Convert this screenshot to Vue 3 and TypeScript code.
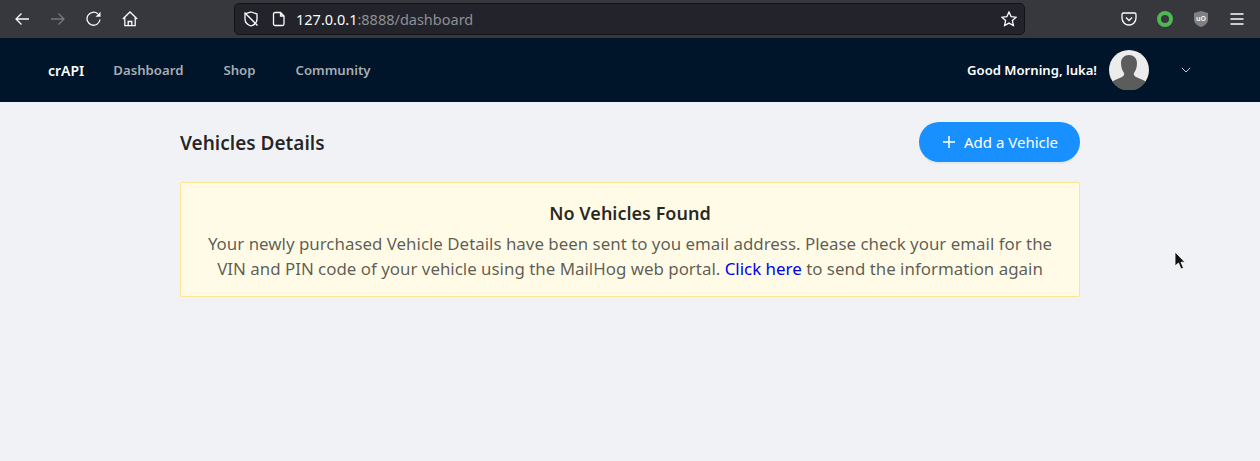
<template>
  <div class="page">
    <div class="browser-bar">
      <div class="browser-nav">
        <button type="button" class="tool-btn">
          <svg viewBox="0 0 16 16" width="16" height="16"><path d="M15 8H2M7.500 2.500 2 8l5.500 5.500" class="stroke thin" /></svg>
        </button>
        <button type="button" class="tool-btn">
          <svg viewBox="0 0 16 16" width="16" height="16"><path d="M1 8h13M8.500 2.500 14 8l-5.500 5.500" class="stroke thin dim" /></svg>
        </button>
        <button type="button" class="tool-btn">
          <svg viewBox="0 0 16 16" width="16" height="16"><path d="M14 8.500A6.500 6.500 0 1 1 11.800 2.800" class="stroke thin" /><path d="M14.500 .8v5h-5z" fill="#fbfbfe" /></svg>
        </button>
        <button type="button" class="tool-btn">
          <svg viewBox="0 0 16 16" width="16" height="16"><path d="M.8 8 8 1l7.200 7M2.800 6.500v8.200h10.400V6.500M6.200 14.700V10.500h3.600v4.200" class="stroke thin" /></svg>
        </button>
      </div>

      <div class="url-box">
        <svg class="url-icon" viewBox="0 0 16 16" width="16" height="16"><path d="M8 1 14 3v5c0 3.500-2.500 5.800-6 7-3.500-1.200-6-3.500-6-7V3z" class="stroke thin" /><path d="M1.500 1.500 14.500 14.500" class="stroke thin" /></svg>
        <svg class="url-icon" viewBox="0 0 16 16" width="16" height="16"><path d="M4 1.500h5.500L13 5v8a1.500 1.500 0 0 1-1.500 1.500h-7.500A1.500 1.500 0 0 1 2.500 13V3A1.500 1.500 0 0 1 4 1.500zM9.500 1.500V5H13" class="stroke thin" /></svg>
        <span class="url-text">127.0.0.1<span class="url-muted">:8888/dashboard</span></span>
        <svg class="url-star" viewBox="0 0 16 16" width="16" height="16"><path d="M8 1l2.100 4.600 5 .6-3.700 3.400 1 5L8 12.100 3.600 14.600l1-5L.9 6.200l5-.6z" class="stroke thin" /></svg>
      </div>

      <div class="browser-tools">
        <svg viewBox="0 0 16 16" width="16" height="16"><path d="M2.500 2h11A1.500 1.500 0 0 1 15 3.500V7A7 7 0 0 1 1 7V3.500A1.500 1.500 0 0 1 2.500 2z" class="stroke thin" /><path d="M5 6.500 8 9.500l3-3" class="stroke thin" /></svg>
        <span class="ring"></span>
        <svg viewBox="0 0 16 16" width="16" height="16"><path d="M8 0 15 2v6.500c0 3.500-3 6-7 7.500-4-1.500-7-4-7-7.500V2z" fill="#808080" /><text x="8" y="9.500" class="ublock">uO</text></svg>
        <svg viewBox="0 0 16 16" width="16" height="16"><path d="M1.500 3h13M1.500 8h13M1.500 13h13" class="stroke thin" /></svg>
      </div>
    </div>

    <header class="navbar">
      <span class="brand">crAPI</span>
      <nav class="nav-links">
        <a v-for="link in links" :key="link" class="nav-link">{{ link }}</a>
      </nav>
      <div class="user">
        <span class="greeting">Good Morning, {{ userName }}!</span>
        <svg class="avatar" viewBox="0 0 40 40" width="40" height="40">
          <circle cx="20" cy="20" r="20" fill="#ececec" />
          <path d="M12 13c0-5 3.500-8 8-8s8 3 8 8c0 4-1 7-3 10-.5 1.500 0 3 2 4l7 3c1 .4 1.800 1 2.500 2A20 20 0 0 1 3.500 32c.7-1 1.500-1.600 2.500-2l7-3c2-1 2.500-2.500 2-4-2-3-3-6-3-10z" fill="#5c5c5c" />
        </svg>
        <svg class="chevron" viewBox="0 0 10 6" width="10" height="6"><path d="M.8.8 5 5 9.200.8" fill="none" stroke="#c5ccd3" stroke-width="1" /></svg>
      </div>
    </header>

    <main class="content">
      <div class="content-head">
        <h2 class="title">Vehicles Details</h2>
        <button type="button" class="add-btn">
          <svg viewBox="0 0 14 14" width="14" height="14"><path d="M7 1v12M1 7h12" fill="none" stroke="#fff" stroke-width="1.500" /></svg>
          <span>Add a Vehicle</span>
        </button>
      </div>

      <section class="alert">
        <h3 class="alert-title">No Vehicles Found</h3>
        <p class="alert-text">
          Your newly purchased Vehicle Details have been sent to you email address. Please check your email for the
          VIN and PIN code of your vehicle using the MailHog web portal.
          <a class="resend">Click here</a> to send the information again
        </p>
      </section>
    </main>

    <svg class="cursor" viewBox="0 0 12 20" width="12" height="20"><path d="M1 1v14l3.500-3 2.500 6 2.500-1-2.500-5.800H11z" fill="#111" stroke="#fff" stroke-width=".8" /></svg>
  </div>
</template>

<script setup lang="ts">
const links: string[] = ['Dashboard', 'Shop', 'Community']
const userName = 'luka'
</script>

<style>
html,
body {
  margin: 0;
  background: #f0f2f5;
}
</style>

<style scoped>
.page {
  position: relative;
  height: 461px;
  background: #f0f2f5;
  font-family: 'Noto Sans', sans-serif;
  overflow: hidden;
}

.browser-bar {
  height: 38px;
  box-sizing: border-box;
  display: flex;
  align-items: center;
  background: #37383e;
  padding-left: 4px;
}

.browser-nav {
  display: flex;
  width: 230px;
  flex: none;
}

.tool-btn {
  width: 36px;
  height: 32px;
  padding: 0;
  border: none;
  background: none;
  display: flex;
  align-items: center;
  justify-content: center;
}

.stroke {
  fill: none;
  stroke: #fbfbfe;
  stroke-width: 1.600;
}

.stroke.thin {
  stroke-width: 1.300;
}

.stroke.dim {
  stroke: #77787c;
}

.url-box {
  width: 791px;
  height: 32px;
  box-sizing: border-box;
  display: flex;
  align-items: center;
  gap: 12px;
  flex: none;
  padding: 0 7px 0 8px;
  background: #23242b;
  border: 1px solid #121317;
  border-radius: 5px;
}

.url-text {
  flex: 1;
  font-size: 14.500px;
  color: #fbfbfe;
  margin-left: -3px;
}

.url-muted {
  color: #8f8f94;
}

.browser-tools {
  display: flex;
  align-items: center;
  gap: 20px;
  margin-left: 96px;
}

.ring {
  width: 8px;
  height: 8px;
  border: 4px solid #4fb84f;
  border-radius: 50%;
  background: #37383e;
}

.ublock {
  font-size: 7px;
  font-weight: 700;
  fill: #eee;
  text-anchor: middle;
}

.navbar {
  height: 64px;
  display: flex;
  align-items: center;
  background: #001529;
  padding: 0 69px 0 48px;
}

.brand {
  color: #fff;
  font-size: 14px;
  font-weight: 600;
}

.nav-links {
  display: flex;
  gap: 40px;
  margin-left: 29px;
}

.nav-link {
  color: #a6adb4;
  font-size: 13.200px;
  font-weight: 600;
}

.user {
  margin-left: auto;
  display: flex;
  align-items: center;
}

.greeting {
  color: #fff;
  font-size: 13.100px;
  font-weight: 600;
}

.avatar {
  margin-left: 12px;
}

.chevron {
  margin-left: 32px;
}

.content {
  width: 900px;
  margin: 0 auto;
  padding-top: 20px;
}

.content-head {
  display: flex;
  align-items: center;
  justify-content: space-between;
  margin-bottom: 20px;
}

.title {
  margin: 0;
  padding-top: 2px;
  font-size: 19px;
  font-weight: 600;
  color: rgba(0, 0, 0, 0.85);
}

.add-btn {
  display: flex;
  align-items: center;
  gap: 8px;
  height: 40px;
  width: 161px;
  padding: 0 0 0 23px;
  border: none;
  border-radius: 20px;
  background: #1890ff;
  color: #fff;
  font-family: inherit;
  font-size: 15px;
  box-shadow: 0 2px 0 rgba(0, 0, 0, 0.045);
}

.alert {
  box-sizing: border-box;
  height: 115px;
  padding: 17px 24px 0;
  text-align: center;
  background: #fffbe6;
  border: 1px solid #ffe58f;
  border-radius: 2px;
}

.alert-title {
  margin: 0 0 4px;
  font-size: 18px;
  font-weight: 600;
  line-height: 27px;
  color: rgba(0, 0, 0, 0.85);
}

.alert-text {
  margin: 0;
  font-size: 16.900px;
  line-height: 25px;
  color: rgba(0, 0, 0, 0.65);
}

.resend {
  color: #0000ee;
}

.cursor {
  position: absolute;
  left: 1174px;
  top: 251px;
}
</style>
